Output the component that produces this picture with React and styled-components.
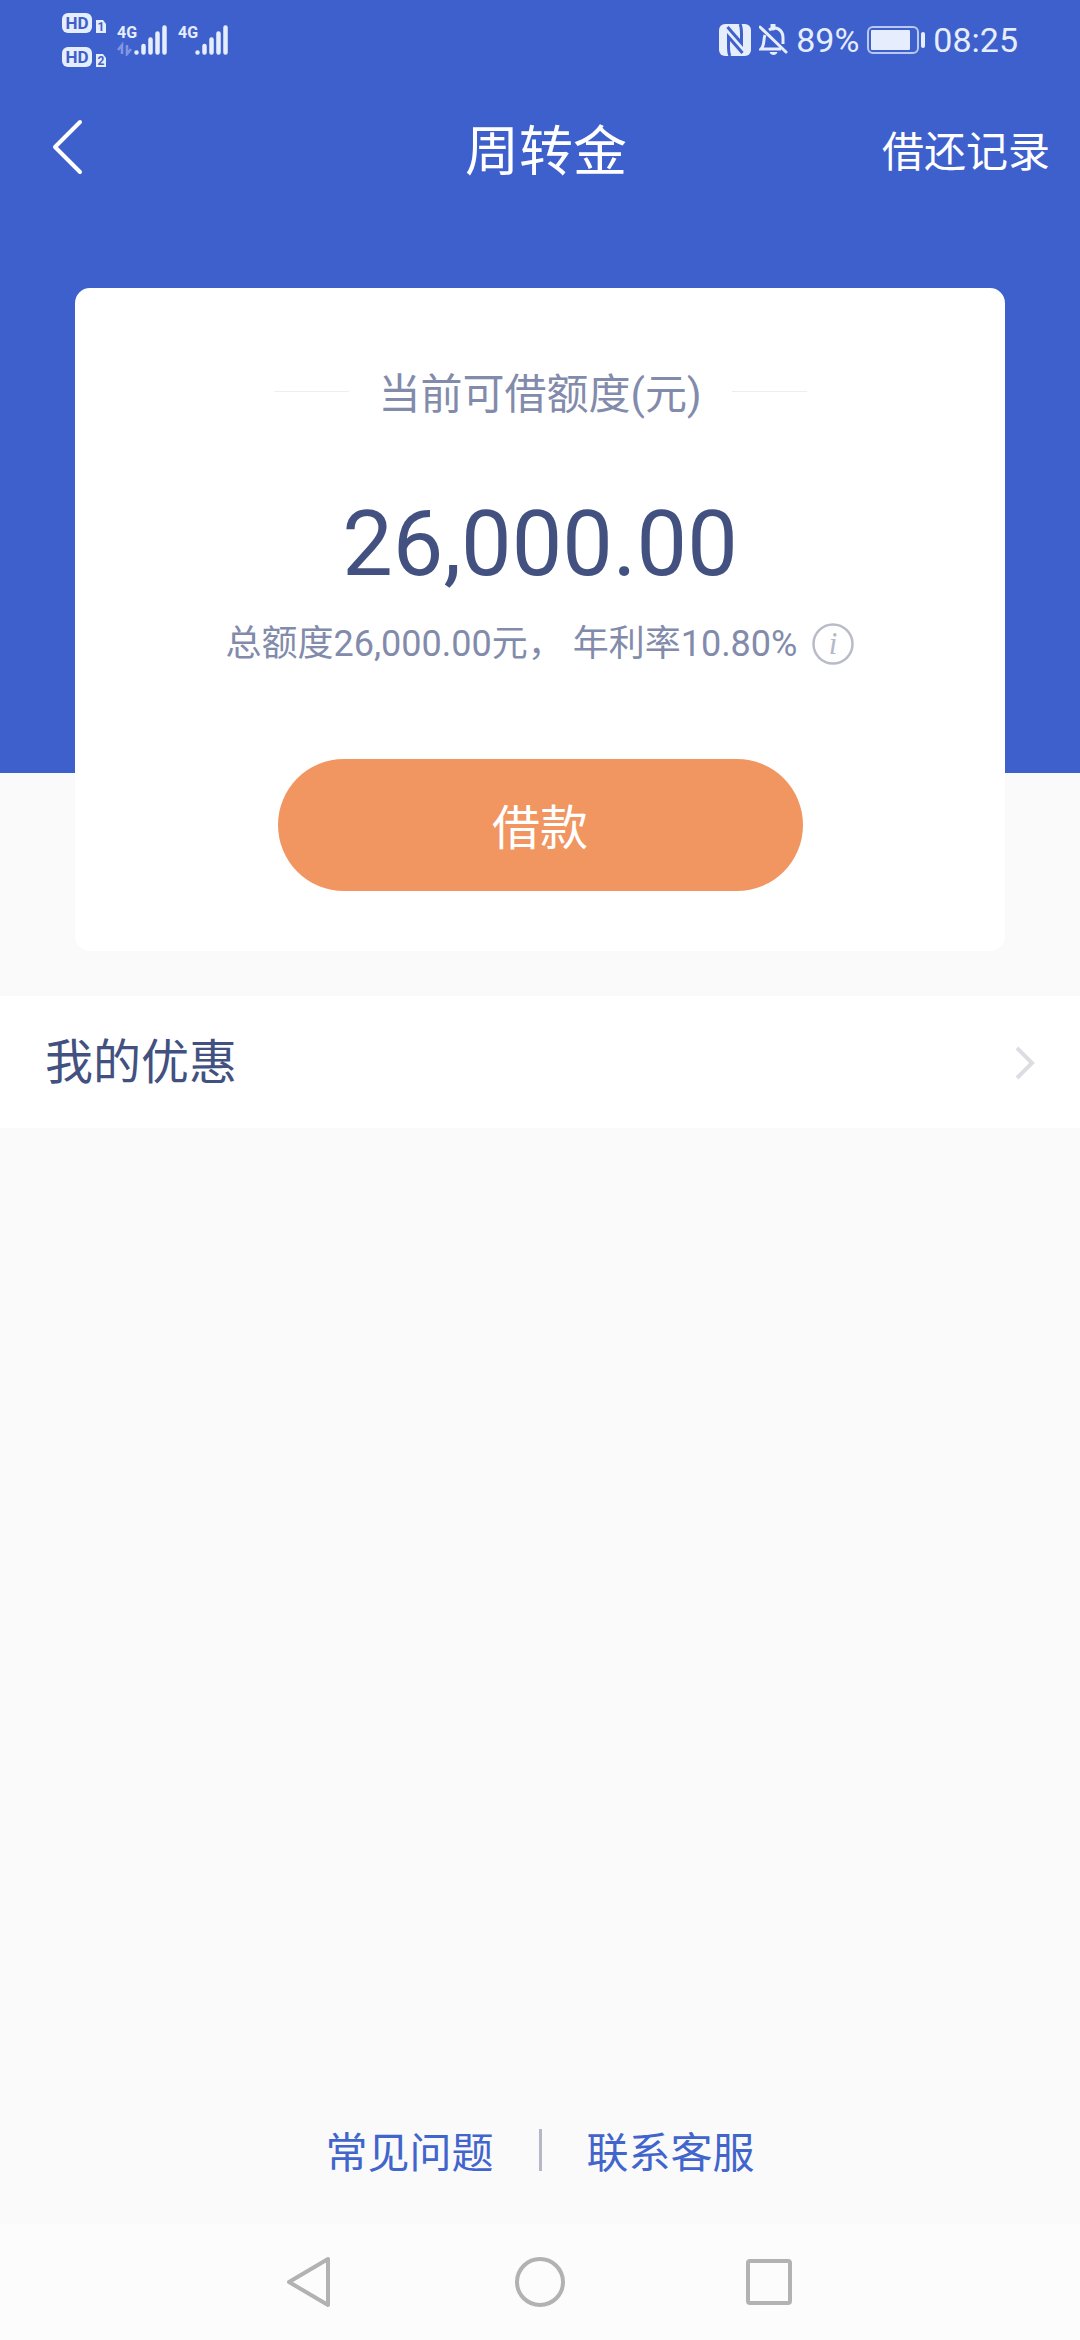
import React from 'react';
import styled, { createGlobalStyle } from 'styled-components';

const GlobalStyle = createGlobalStyle`
  * { box-sizing: border-box; }
  body {
    margin: 0;
    background: #fafafa;
    font-family: Roboto, "Noto Sans CJK SC", sans-serif;
  }
  button {
    margin: 0;
    padding: 0;
    border: 0;
    background: none;
    color: inherit;
    font: inherit;
    cursor: pointer;
  }
  svg { display: block; flex: none; }
`;

const Screen = styled.div`
  display: flex;
  flex-direction: column;
  min-height: 100vh;
  background: linear-gradient(#3e60cc 773px, #fafafa 773px);
`;

const StatusBar = styled.div`
  display: flex;
  align-items: center;
  justify-content: space-between;
  height: 80px;
  padding: 0 62px;
  color: #e6edfc;
  font-size: 34px;
  line-height: 40px;
`;

const StatusGroup = styled.div`
  display: flex;
  align-items: center;
  gap: ${(p) => p.$gap}px;
`;

const Header = styled.header`
  display: grid;
  grid-template-columns: 1fr auto 1fr;
  align-items: center;
  height: 134px;
  padding: 0 30px;
  color: #fff;
`;

const BackButton = styled.button`
  justify-self: start;
  && { padding: 0 20px; }
`;

const Title = styled.h1`
  margin: 0;
  padding: 12px 0 0 12px;
  font-size: 54px;
  font-weight: 400;
  line-height: 80px;
`;

const HeaderLink = styled.a`
  justify-self: end;
  padding-top: 12px;
  color: inherit;
  font-size: 42px;
  line-height: 60px;
  text-decoration: none;
`;

const Card = styled.section`
  display: flex;
  flex-direction: column;
  align-items: center;
  margin: 74px 75px 0;
  padding: 77px 0 60px;
  border-radius: 15px;
  background: #fff;
  color: #828bab;
`;

const Caption = styled.h2`
  display: flex;
  align-items: center;
  gap: 30px;
  margin: 0;
  font-size: 42px;
  font-weight: 400;
  line-height: 60px;

  &::before,
  &::after {
    content: "";
    width: 75px;
    height: 1px;
    margin-bottom: 8px;
    background: #eeeef0;
  }
`;

const Amount = styled.p`
  margin: 64px 0 0;
  color: #42517f;
  font-size: 90px;
  line-height: 112px;
`;

const Terms = styled.div`
  display: flex;
  align-items: center;
  gap: 15px;
  margin-top: 16px;
  font-size: 36px;
  line-height: 54px;
`;

const LoanButton = styled.button`
  && {
    width: 525px;
    max-width: 90%;
    height: 132px;
    margin-top: 88px;
    padding-top: 8px;
    border-radius: 66px;
    background: #f19661;
    color: #fff;
    font-size: 48px;
    line-height: 72px;
  }
`;

const OfferRow = styled.a`
  display: flex;
  align-items: center;
  justify-content: space-between;
  height: 132px;
  margin-top: 45px;
  padding: 2px 45px 0;
  background: #fff;
  color: #42517f;
  font-size: 48px;
  line-height: 72px;
  text-decoration: none;
`;

const HelpLinks = styled.footer`
  display: flex;
  align-items: center;
  justify-content: center;
  gap: 45px;
  margin-top: auto;
  padding-bottom: 40px;
`;

const HelpLink = styled.a`
  padding-top: 8px;
  color: #4165cc;
  font-size: 42px;
  line-height: 60px;
  text-decoration: none;
`;

const Divider = styled.span`
  width: 3px;
  height: 42px;
  background: #b5b8c4;
`;

const NavBar = styled.nav`
  display: flex;
  align-items: center;
  justify-content: center;
  gap: 169px;
  height: 116px;
  background: #fcfcfc;
`;

const HdBadges = () => (
  <svg width="44" height="54" viewBox="0 0 44 54" fontFamily="Roboto, sans-serif" fontWeight="700" aria-label="HD 1, HD 2">
    {[1, 2].map((sim) => (
      <g key={sim} transform={`translate(0 ${(sim - 1) * 34})`}>
        <rect width="30" height="20" rx="6" fill="#e6edfc" />
        <text x="15" y="16" fontSize="17" textAnchor="middle" fill="#3e60cc">HD</text>
        <path d="M34 7h7l3 4v9H34z" fill="#e6edfc" />
        <text x="39" y="18" fontSize="12" textAnchor="middle" fill="#3e60cc">{sim}</text>
      </g>
    ))}
  </svg>
);

const Signal = ({ data }) => (
  <svg width="50" height="32" viewBox="0 0 50 32" aria-label="4G">
    <text x="0" y="14" fontSize="16" fontWeight="700" fontFamily="Roboto, sans-serif" fill="#e6edfc">4G</text>
    {data && (
      <path d="M1 26l4-5v9M10 21v9l4-5" fill="none" stroke="#8096e2" strokeWidth="2.5" />
    )}
    <path d="M19.500 28.500v0M26.500 22v6.500M33.500 15.500v13M40.500 9.500v19M47.500 3.500v25" fill="none" stroke="#e6edfc" strokeWidth="4.500" strokeLinecap="round" />
  </svg>
);

const NfcIcon = () => (
  <svg width="32" height="32" viewBox="0 0 32 32">
    <rect width="32" height="32" rx="6" fill="#e6edfc" />
    <path d="M11 32C9.500 29 9.500 26 9.500 22V13L23.500 29M21 0c1.500 3 1.500 6 1.500 10v9L8.500 3" fill="none" stroke="#3e60cc" strokeWidth="3" />
  </svg>
);

const MutedBellIcon = () => (
  <svg width="29" height="32" viewBox="0 0 29 32" fill="none" stroke="#e6edfc" strokeWidth="3">
    <path d="M6 11C4 16 6 21 2 25h20M10 6c7-5 14 0 14 8v6" />
    <path d="M1 3l26 25" strokeLinecap="round" />
    <path d="M14 1v3" strokeWidth="5" strokeLinecap="round" />
    <path d="M10.500 28h8c-1 4-7 4-8 0z" fill="#e6edfc" stroke="none" />
  </svg>
);

const BatteryIcon = () => (
  <svg width="58" height="28" viewBox="0 0 58 28">
    <rect x="1" y="1" width="50" height="26" rx="5" fill="none" stroke="#b9c8f0" strokeWidth="2" />
    <rect x="4" y="4" width="39" height="20" rx="1" fill="#e6edfc" />
    <rect x="54" y="6" width="4" height="16" rx="2" fill="#e6edfc" />
  </svg>
);

const InfoIcon = () => (
  <svg width="42" height="42" viewBox="0 0 42 42">
    <circle cx="21" cy="21" r="19.500" fill="none" stroke="#b9bcc8" strokeWidth="2.500" />
    <text x="21" y="31" fontSize="31" fontStyle="italic" textAnchor="middle" fontFamily="Liberation Serif, serif" fill="#b4b9c9">i</text>
  </svg>
);

export default function App() {
  return (
    <Screen>
      <GlobalStyle />
      <StatusBar>
        <StatusGroup $gap={11}>
          <HdBadges />
          <Signal data />
          <Signal />
        </StatusGroup>
        <StatusGroup $gap={8}>
          <NfcIcon />
          <MutedBellIcon />
          <span>89%</span>
          <BatteryIcon />
          <time>08:25</time>
        </StatusGroup>
      </StatusBar>
      <Header>
        <BackButton aria-label="返回">
          <svg width="34" height="56" viewBox="0 0 34 56" fill="none" stroke="#fff" strokeWidth="4" strokeLinecap="round" strokeLinejoin="round">
            <path d="M30 3L5 28l25 25" />
          </svg>
        </BackButton>
        <Title>周转金</Title>
        <HeaderLink href="#records">借还记录</HeaderLink>
      </Header>
      <main>
        <Card>
          <Caption>当前可借额度(元)</Caption>
          <Amount>26,000.00</Amount>
          <Terms>
            <span>总额度26,000.00元， 年利率10.80%</span>
            <button aria-label="利率说明"><InfoIcon /></button>
          </Terms>
          <LoanButton>借款</LoanButton>
        </Card>
        <OfferRow href="#offers">
          我的优惠
          <svg width="20" height="34" viewBox="0 0 20 34" fill="none" stroke="#dcdce2" strokeWidth="4">
            <path d="M2 2l15 15L2 32" />
          </svg>
        </OfferRow>
      </main>
      <HelpLinks>
        <HelpLink href="#faq">常见问题</HelpLink>
        <Divider />
        <HelpLink href="#support">联系客服</HelpLink>
      </HelpLinks>
      <NavBar>
        <button aria-label="后退">
          <svg width="60" height="60" viewBox="0 0 60 60" fill="none" stroke="#b2b2b2" strokeWidth="4" strokeLinejoin="round">
            <path d="M47 7v46L8 30z" />
          </svg>
        </button>
        <button aria-label="主屏幕">
          <svg width="60" height="60" viewBox="0 0 60 60" fill="none" stroke="#b2b2b2" strokeWidth="4">
            <circle cx="30" cy="30" r="23" />
          </svg>
        </button>
        <button aria-label="最近任务">
          <svg width="60" height="60" viewBox="0 0 60 60" fill="none" stroke="#b2b2b2" strokeWidth="4">
            <rect x="9" y="9" width="42" height="42" rx="2" />
          </svg>
        </button>
      </NavBar>
    </Screen>
  );
}
